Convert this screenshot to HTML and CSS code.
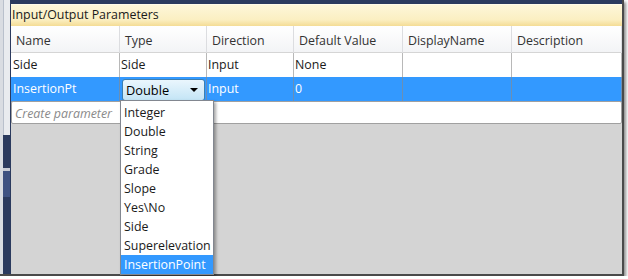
FILE: index.html
```html
<!DOCTYPE html>
<html lang="en">
<head>
    <meta charset="UTF-8">
    <title>Input/Output Parameters</title>
    <link rel="stylesheet" href="styles.css">
</head>
<body>

    <div class="shot">
        <!-- left edge of the host window -->
        <div class="side">
            <div class="side-top"></div>
            <div class="side-dark"></div>
            <div class="side-band"></div>
            <div class="side-dark grow"></div>
        </div>

        <div class="main">
            <div class="top-strip"></div>

            <div class="panel">
                <div class="title">Input/Output Parameters</div>

                <div class="grid head">
                    <div class="cell">Name</div>
                    <div class="cell">Type</div>
                    <div class="cell">Direction</div>
                    <div class="cell">Default Value</div>
                    <div class="cell">DisplayName</div>
                    <div class="cell">Description</div>
                </div>

                <div class="grid row">
                    <div class="cell">Side</div>
                    <div class="cell">Side</div>
                    <div class="cell">Input</div>
                    <div class="cell">None</div>
                    <div class="cell"></div>
                    <div class="cell"></div>
                </div>

                <div class="grid row selected">
                    <div class="cell">InsertionPt</div>
                    <div class="cell combo-cell">
                        <div class="combo">
                            <span>Double</span>
                            <span class="arrow"></span>
                        </div>
                        <ul class="dropdown">
                            <li>Integer</li>
                            <li>Double</li>
                            <li>String</li>
                            <li>Grade</li>
                            <li>Slope</li>
                            <li>Yes\No</li>
                            <li>Side</li>
                            <li>Superelevation</li>
                            <li class="hot">InsertionPoint</li>
                        </ul>
                    </div>
                    <div class="cell">Input</div>
                    <div class="cell">0</div>
                    <div class="cell"></div>
                    <div class="cell"></div>
                </div>

                <div class="create">Create parameter</div>

                <div class="empty"></div>
            </div>
        </div>
    </div>

</body>
</html>
```

FILE: styles.css
```css
body {
    margin: 0;
    background-color: #ffffff;
    font-family: 'Open Sans', 'Noto Sans', sans-serif;
    font-size: 12.4px;
    color: #1a1a1a;
}
.shot {
    width: 622px;
    height: 274px;
    display: flex;
    border-right: 2px solid #4a4a4a;
    border-bottom: 2px solid #4a4a4a;
    box-shadow: 2px 2px 3px rgba(0, 0, 0, 0.45);
}
.side {
    width: 10px;
    display: flex;
    flex-direction: column;
    border-left: 3px solid #d9dce2;
    box-sizing: border-box;
}
.side-top {
    height: 135px;
    background-color: #e9ebef;
    border-left: 1px solid #b9c0cc;
}
.side-dark {
    height: 33px;
    background-color: #2b3a5e;
}
.side-band {
    height: 26px;
    background-color: #3f5282;
    border-top: 3px solid #c8ccd6;
}
.grow {
    flex: 1;
}
.main {
    flex: 1;
    display: flex;
    flex-direction: column;
}
.top-strip {
    height: 4px;
    background-color: #2b3a5e;
}
.panel {
    flex: 1;
    display: flex;
    flex-direction: column;
    border-left: 1px solid #2b3a5e;
    background-color: #d4d4d4;
}
.title {
    height: 21px;
    line-height: 20px;
    padding-left: 1px;
    background: linear-gradient(#fdf6d9, #fbefc2 70%, #f4dc95);
    border-top: 1px solid #fffbe8;
    color: #1a1a1a;
}
.grid {
    display: grid;
    grid-template-columns: 109px 87px 87px 109px 109px 1fr;
}
.head {
    height: 27px;
    background: linear-gradient(#ffffff, #f3f4f6);
    border-bottom: 1px solid #d5d5d5;
    box-sizing: border-box;
}
.head .cell {
    padding-left: 5px;
    padding-top: 2px;
    line-height: 26px;
    border-right: 1px solid #dcdde0;
    color: #333333;
}
.row {
    height: 24px;
    background-color: #ffffff;
}
.row .cell {
    padding-left: 1px;
    line-height: 24px;
    border-right: 1px solid #b8b8b8;
    border-bottom: 1px solid #a8a8a8;
}
.row .cell:first-child {
    padding-left: 2px;
}
.selected {
    height: 24px;
    background-color: #3399ff;
    color: #ffffff;
}
.selected .cell {
    border-color: #6a8fb5;
}
.combo-cell {
    position: relative;
}
.combo {
    margin: 2px 1px 0 1px;
    height: 20px;
    padding: 0 6px 0 3px;
    display: flex;
    align-items: center;
    justify-content: space-between;
    border: 1px solid #3c7fb1;
    border-radius: 3px;
    background: linear-gradient(#eaf6fd, #c4e5f6);
    color: #000000;
    font-size: 12.8px;
    line-height: 20px;
}
.arrow {
    width: 0;
    height: 0;
    border-left: 4px solid transparent;
    border-right: 4px solid transparent;
    border-top: 4px solid #000000;
}
.dropdown {
    position: absolute;
    left: 0;
    top: 23px;
    width: 92px;
    margin: 0;
    padding: 2px 0 0 0;
    list-style: none;
    background-color: #ffffff;
    border: 1px solid #828790;
    box-shadow: 2px 2px 3px rgba(0, 0, 0, 0.35);
    color: #1a1a1a;
    z-index: 2;
}
.dropdown li {
    height: 19px;
    line-height: 19px;
    padding-left: 3px;
}
.dropdown .hot {
    background-color: #3399ff;
    color: #ffffff;
}
.create {
    height: 23px;
    line-height: 23px;
    padding-left: 3px;
    background-color: #ffffff;
    border: 1px solid #a0a0a0;
    border-radius: 2px;
    box-sizing: border-box;
    color: #8a8a8a;
    font-style: italic;
}
.empty {
    flex: 1;
    background-color: #d4d4d4;
}
```
